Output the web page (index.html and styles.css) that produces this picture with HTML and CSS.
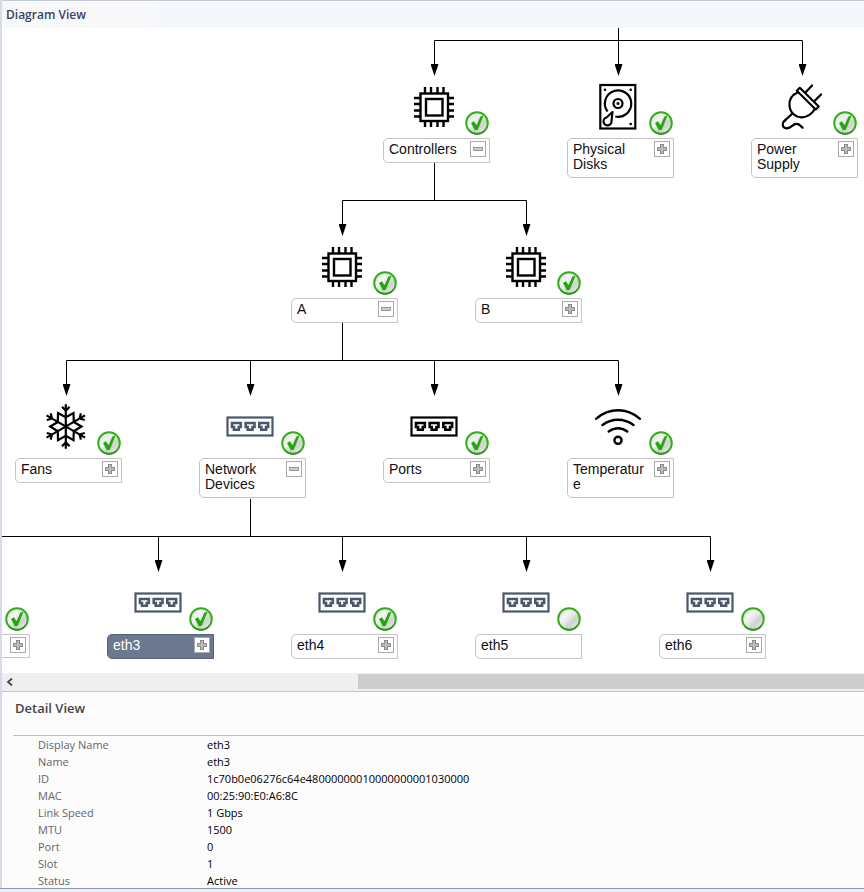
FILE: index.html
```
<!DOCTYPE html>
<html lang="en">
<head>
<meta charset="utf-8">
<title>Diagram View</title>
<link rel="stylesheet" href="styles.css">
</head>
<body>
<svg class="defs" aria-hidden="true">
  <defs>
    <linearGradient id="shine" x1="0" y1="0" x2="1" y2="1">
      <stop offset="0" stop-color="#d2d2d2"/>
      <stop offset=".35" stop-color="#f4f4f4"/>
      <stop offset=".5" stop-color="#e6e6e6"/>
      <stop offset=".65" stop-color="#cfcfcf"/>
      <stop offset="1" stop-color="#fafafa"/>
    </linearGradient>
    <marker id="arrow" viewBox="0 0 9 12" refX="4" refY="11" markerWidth="9" markerHeight="12" markerUnits="userSpaceOnUse"><path d="M0 0h8L4 12z"/></marker>
  </defs>
  <symbol id="chip" viewBox="0 0 48 48">
    <g fill="none" stroke="currentColor" stroke-width="2.400">
      <rect x="10.500" y="10.500" width="27.500" height="27.500"/>
      <rect x="16" y="16" width="16.500" height="16.500"/>
      <path d="M15 4v6M21 4v6M27.500 4v6M33.500 4v6M15 38v6M21 38v6M27.500 38v6M33.500 38v6M4 15h6M4 21h6M4 27.500h6M4 33.500h6M38 15h6M38 21h6M38 27.500h6M38 33.500h6"/>
    </g>
  </symbol>
  <symbol id="disk" viewBox="0 0 48 48">
    <g fill="none" stroke="currentColor" stroke-width="2.200">
      <rect x="6.300" y="2" width="35" height="43.500"/>
      <path d="M13.500 28.500a13.200 13.200 0 1 1 7.800 5"/>
      <circle cx="24" cy="20.500" r="4.500"/>
      <path d="M18.500 29l-6 5.500a4 4 0 1 0 5 3.500z" stroke-linejoin="round"/>
    </g>
    <g fill="currentColor"><circle cx="24" cy="20.500" r="1.500"/><circle cx="11" cy="6.700" r="1.300"/><circle cx="36.700" cy="6.700" r="1.300"/><circle cx="36.700" cy="41" r="1.300"/></g>
  </symbol>
  <symbol id="plug" viewBox="0 0 48 48">
    <g fill="none" stroke="currentColor" stroke-width="2.200" stroke-linecap="round" stroke-linejoin="round">
      <path d="M18.800 7.800l3-3L40.700 23.500l-3 3zM27.500 9.500l6.500-7M36.500 18l6.500-6.500"/>
      <path d="M19.500 9.500C14 12 11 17 11.500 22.500C12 30 18 34.500 24 34.300C29 34 33.500 31.500 36.500 26.500"/>
      <path d="M14.500 30.500l-6 5.500C3 40 4 45 8.500 45.300C14 45.500 14 40.800 18.500 40.800C22 40.800 22 43 24.700 44.700"/>
    </g>
  </symbol>
  <symbol id="snow" viewBox="0 0 48 48">
    <g fill="none" stroke="currentColor" stroke-width="2.200">
      <path d="M39.500 23.500L31.800 28.200 31.500 37.100 23.800 32.800 16 37.100 15.800 28.200 8.200 23.500 15.800 19 16 10 23.800 14.200 31.500 10 31.800 19z"/>
      <path id="arm" d="M23.800 1.300v44.400M20 3.800l3.800 3.800 3.800-3.800M20 43.200l3.800-3.800 3.800 3.800"/>
      <use href="#arm" transform="rotate(60 23.800 23.500)"/>
      <use href="#arm" transform="rotate(120 23.800 23.500)"/>
    </g>
  </symbol>
  <symbol id="ether" viewBox="0 0 48 48">
    <g fill="none" stroke="currentColor" stroke-width="2.200">
      <rect x="1.500" y="14.500" width="45" height="18"/>
      <g stroke-width="2.600">
        <path id="jack" d="M6 20h8.800v4h-2v2.800h-4.800v-2.800h-2z"/>
        <use href="#jack" x="13.700"/><use href="#jack" x="27.300"/>
      </g>
    </g>
  </symbol>
  <symbol id="wifi" viewBox="0 0 48 48">
    <g fill="none" stroke="currentColor" stroke-width="2.400" stroke-linecap="round">
      <path d="M2 15.800Q12 7.300 24 7.300T46 15.800M8.500 22Q15.500 16.700 24 16.700T39.500 22M14.700 28.500Q19 25.200 24 25.200T33.300 28.500"/>
      <circle cx="24" cy="37.300" r="3.600"/>
    </g>
  </symbol>
  <symbol id="idle" viewBox="0 0 24 24">
    <circle cx="12" cy="12" r="10.800" fill="url(#shine)" stroke="#32b016" stroke-width="2"/>
    <path d="M4 19.500A11 11 0 0 0 20 19.500" fill="none" stroke="#3d8c35" stroke-width="1.500"/>
  </symbol>
  <symbol id="ok" viewBox="0 0 24 24">
    <use href="#idle"/>
    <path d="M6 12l3-1.700 2.500 4L15.500 5.500l3-.7-5.700 14-3 .5z" fill="#22aa08"/>
  </symbol>
</svg>

<main class="panel">
  <h1 class="title">Diagram View</h1>
  <section class="canvas" aria-label="Diagram">
    <svg class="edges" viewBox="2 28 862 645" aria-hidden="true">
      <g class="wire">
        <path d="M434.500 40.500H802.500M434.500 163V200.500M342.500 200.500H526.500M342.500 323V360.500M66.500 360.500H618.500M250.500 499V536.500M2 536.500H710.500"/>
        <path class="tip" d="M434.500 40.500V75"/><path class="tip" d="M618.500 28V75"/><path class="tip" d="M802.500 40.500V75"/>
        <path class="tip" d="M342.500 200.500V235"/><path class="tip" d="M526.500 200.500V235"/>
        <path class="tip" d="M66.500 360.500V395"/><path class="tip" d="M250.500 360.500V395"/><path class="tip" d="M434.500 360.500V395"/><path class="tip" d="M618.500 360.500V395"/>
        <path class="tip" d="M158.500 536.500V571"/><path class="tip" d="M342.500 536.500V571"/><path class="tip" d="M526.500 536.500V571"/><path class="tip" d="M710.500 536.500V571"/>
      </g>
    </svg>

    <div class="node col-5 row-1"><svg class="icon"><use href="#chip"/></svg><svg class="badge"><use href="#ok"/></svg>
      <div class="box"><span class="name">Controllers</span><button class="toggle open" aria-expanded="true"></button></div></div>
    <div class="node col-7 row-1"><svg class="icon"><use href="#disk"/></svg><svg class="badge"><use href="#ok"/></svg>
      <div class="box"><span class="name">Physical Disks</span><button class="toggle" aria-expanded="false"></button></div></div>
    <div class="node col-9 row-1"><svg class="icon"><use href="#plug"/></svg><svg class="badge"><use href="#ok"/></svg>
      <div class="box"><span class="name">Power Supply</span><button class="toggle" aria-expanded="false"></button></div></div>

    <div class="node col-4 row-2"><svg class="icon"><use href="#chip"/></svg><svg class="badge"><use href="#ok"/></svg>
      <div class="box"><span class="name">A</span><button class="toggle open" aria-expanded="true"></button></div></div>
    <div class="node col-6 row-2"><svg class="icon"><use href="#chip"/></svg><svg class="badge"><use href="#ok"/></svg>
      <div class="box"><span class="name">B</span><button class="toggle" aria-expanded="false"></button></div></div>

    <div class="node col-1 row-3"><svg class="icon"><use href="#snow"/></svg><svg class="badge"><use href="#ok"/></svg>
      <div class="box"><span class="name">Fans</span><button class="toggle" aria-expanded="false"></button></div></div>
    <div class="node col-3 row-3"><svg class="icon slate"><use href="#ether"/></svg><svg class="badge"><use href="#ok"/></svg>
      <div class="box"><span class="name">Network Devices</span><button class="toggle open" aria-expanded="true"></button></div></div>
    <div class="node col-5 row-3"><svg class="icon"><use href="#ether"/></svg><svg class="badge"><use href="#ok"/></svg>
      <div class="box"><span class="name">Ports</span><button class="toggle" aria-expanded="false"></button></div></div>
    <div class="node col-7 row-3"><svg class="icon"><use href="#wifi"/></svg><svg class="badge"><use href="#ok"/></svg>
      <div class="box"><span class="name">Temperature</span><button class="toggle" aria-expanded="false"></button></div></div>

    <div class="node col-0 row-4"><svg class="badge"><use href="#ok"/></svg>
      <div class="box"><span class="name"></span><button class="toggle" aria-expanded="false"></button></div></div>
    <div class="node col-2 row-4 selected"><svg class="icon slate"><use href="#ether"/></svg><svg class="badge"><use href="#ok"/></svg>
      <div class="box"><span class="name">eth3</span><button class="toggle" aria-expanded="false"></button></div></div>
    <div class="node col-4 row-4"><svg class="icon slate"><use href="#ether"/></svg><svg class="badge"><use href="#ok"/></svg>
      <div class="box"><span class="name">eth4</span><button class="toggle" aria-expanded="false"></button></div></div>
    <div class="node col-6 row-4"><svg class="icon slate"><use href="#ether"/></svg><svg class="badge"><use href="#idle"/></svg>
      <div class="box"><span class="name">eth5</span></div></div>
    <div class="node col-8 row-4"><svg class="icon slate"><use href="#ether"/></svg><svg class="badge"><use href="#idle"/></svg>
      <div class="box"><span class="name">eth6</span><button class="toggle" aria-expanded="false"></button></div></div>
  </section>

  <div class="scrollbar">
    <button class="scroll-left"><svg viewBox="0 0 8 8" width="8" height="8"><path d="M6 .5L2 4l4 3.500" fill="none" stroke="#444" stroke-width="1.800"/></svg></button>
    <div class="track"><div class="thumb"></div></div>
  </div>

  <section class="detail">
    <h2 class="subtitle">Detail View</h2>
    <table class="facts">
      <tbody>
        <tr><th scope="row">Display Name</th><td>eth3</td></tr>
        <tr><th scope="row">Name</th><td>eth3</td></tr>
        <tr><th scope="row">ID</th><td>1c70b0e06276c64e48000000010000000001030000</td></tr>
        <tr><th scope="row">MAC</th><td>00:25:90:E0:A6:8C</td></tr>
        <tr><th scope="row">Link Speed</th><td>1 Gbps</td></tr>
        <tr><th scope="row">MTU</th><td>1500</td></tr>
        <tr><th scope="row">Port</th><td>0</td></tr>
        <tr><th scope="row">Slot</th><td>1</td></tr>
        <tr><th scope="row">Status</th><td>Active</td></tr>
      </tbody>
    </table>
  </section>
</main>
<div class="footer"></div>
</body>
</html>
```
FILE: styles.css
```
* { box-sizing: border-box; }
body {
  margin: 0;
  height: 100vh;
  display: flex;
  flex-direction: column;
  overflow: hidden;
  background: #fff;
  font-family: "Open Sans", "Noto Sans", sans-serif;
  font-size: 11px;
}
.defs { position: absolute; width: 0; height: 0; }
.panel {
  flex: 1;
  min-height: 0;
  display: flex;
  flex-direction: column;
  border-left: 2px solid #d3dce8;
}
.title {
  flex: none;
  margin: 0;
  height: 28px;
  padding-left: 4px;
  border-top: 1px solid #c6cbd6;
  background: linear-gradient(90deg, #f8f8fb 152px, #f4f7fc 152px);
  color: #3a3f60;
  font-size: 12px;
  font-weight: 600;
  line-height: 28px;
}
.canvas {
  flex: none;
  position: relative;
  height: 645px;
  overflow: hidden;
  background: #fff;
}
.edges { position: absolute; left: 0; top: 0; width: 862px; height: 645px; }
.wire { fill: none; stroke: #000; stroke-width: 1; }
.tip { marker-end: url("#arrow"); }

/* Nodes sit on a free canvas: columns are 92px apart */
.node { position: absolute; width: 107px; padding-top: 55px; }
.col-0 { left: -79px; }
.col-1 { left: 13px; }
.col-2 { left: 105px; }
.col-3 { left: 197px; }
.col-4 { left: 289px; }
.col-5 { left: 381px; }
.col-6 { left: 473px; }
.col-7 { left: 565px; }
.col-8 { left: 657px; }
.col-9 { left: 749px; }
.row-1 { top: 55px; }
.row-2 { top: 215px; }
.row-3 { top: 375px; }
.row-4 { top: 551px; }
.icon { position: absolute; left: 27px; top: 0; width: 48px; height: 48px; color: #000; }
.slate { color: #4a5969; }
.badge { position: absolute; left: 82px; top: 28px; width: 24px; height: 24px; }
.box {
  display: flex;
  justify-content: space-between;
  align-items: flex-start;
  min-height: 24px;
  padding: 3px 3px 5px 5px;
  border: 1px solid #c4c4c4;
  border-radius: 5px 0 0 5px;
  background: #fff;
  color: #111;
  font-family: "Liberation Sans", Arial, sans-serif;
  font-size: 14px;
  line-height: 15px;
}
.name { width: 74px; overflow-wrap: anywhere; }
.toggle {
  flex: none;
  width: 16px;
  height: 16px;
  margin: -1px 0;
  padding: 0;
  border: 1px solid #aaa;
  background:
    linear-gradient(#b4b4b4, #b4b4b4) center / 8px 2px no-repeat,
    linear-gradient(#808080, #808080) center / 10px 4px no-repeat,
    linear-gradient(#808080, #808080) center / 4px 10px no-repeat,
    #fff;
  background:
    linear-gradient(#bbb, #bbb) center / 8px 2px no-repeat,
    linear-gradient(#bbb, #bbb) center / 2px 8px no-repeat,
    linear-gradient(#8c8c8c, #8c8c8c) center / 10px 4px no-repeat,
    linear-gradient(#8c8c8c, #8c8c8c) center / 4px 10px no-repeat,
    #fff;
}
.toggle.open {
  background:
    linear-gradient(#ccc, #ccc) center / 8px 2px no-repeat,
    linear-gradient(#999, #999) center / 10px 4px no-repeat,
    #fff;
}
.selected .box { border-color: #556378; background: #6b788e; color: #fff; }

.scrollbar { flex: none; display: flex; height: 18px; background: #efefef; }
.scroll-left {
  display: flex;
  align-items: center;
  justify-content: center;
  width: 16px;
  padding: 0;
  border: 0;
  background: none;
}
.track { flex: 1; display: flex; justify-content: flex-end; padding: 1px 0 2px; }
.thumb { width: calc(60% - 2px); background: #cdcdcd; }

.detail {
  flex: 1;
  min-height: 0;
  overflow: hidden;
  border-top: 1px solid #c8c8c8;
  background: #fcfcfc;
}
.subtitle {
  margin: 0;
  padding-left: 13px;
  color: #444;
  font-size: 13px;
  font-weight: 600;
  line-height: 32px;
}
.facts {
  width: calc(100% - 11px);
  margin: 11px 0 0 11px;
  border-top: 1px solid #bdbdbd;
  border-spacing: 0;
}
.facts th, .facts td { height: 17px; padding: 0; line-height: 17px; text-align: left; }
.facts th { width: 194px; padding-left: 25px; color: #666; font-weight: 400; }
.facts td { color: #000; }
.footer { flex: none; height: 4px; border-top: 1px solid #8e9bb0; background: #edf2f9; }
```
